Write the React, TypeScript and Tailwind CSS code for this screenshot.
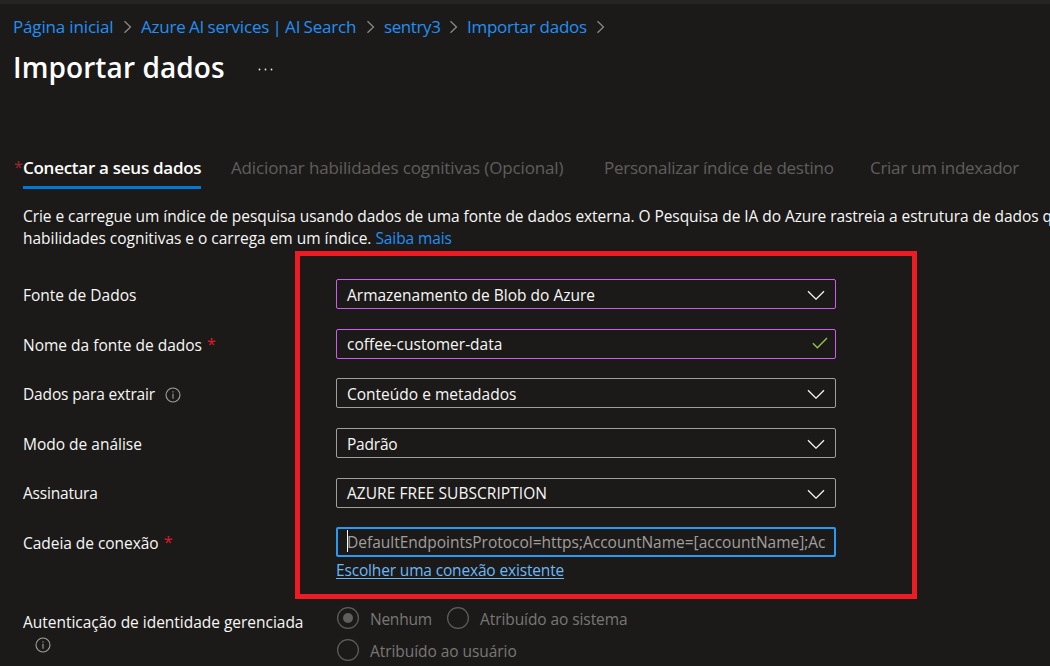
import type { ReactNode } from 'react';

const FIELD = 'flex h-[30px] w-[500px] justify-between rounded-[2px] border';

function CrumbArrow() {
  return (
    <svg className="mr-[9px] h-[14px] w-[9px] shrink-0" viewBox="0 0 9 14" fill="none" stroke="#8f8d8b" strokeWidth="1.2">
      <path d="M1.5 1.2 7.5 7 1.5 12.8" />
    </svg>
  );
}

function Crumb({ className, children }: { className: string; children: ReactNode }) {
  return (
    <li className={`flex items-center justify-between whitespace-nowrap ${className}`}>
      <a href="#" className="text-[#2190f5]">{children}</a>
      <CrumbArrow />
    </li>
  );
}

function ChevronDown() {
  return (
    <svg className="mt-[10px] mr-[10px] h-[10px] w-[18px] shrink-0" viewBox="0 0 18 10" fill="none" stroke="#f3f2f1" strokeWidth="1.3">
      <path d="M1 1.2 9 9.2 17 1.2" />
    </svg>
  );
}

function Info({ className }: { className: string }) {
  return (
    <svg className={`size-4 shrink-0 ${className}`} viewBox="0 0 16 16" fill="none" stroke="#a19f9d" strokeWidth="1.1">
      <circle cx="8" cy="8" r="7" />
      <path d="M8 6.7v5M8 4.2v1.3" />
    </svg>
  );
}

function Star() {
  return <span className="mb-[4px] ml-[5px] text-[16px] text-[#e3182d]">*</span>;
}

function Row({ height, label, children }: { height: string; label: ReactNode; children: ReactNode }) {
  return (
    <div className={`flex items-start ${height}`}>
      <div className="flex h-[34px] w-[313px] shrink-0 items-center whitespace-nowrap">{label}</div>
      {children}
    </div>
  );
}

function Select({ border, children }: { border: string; children: ReactNode }) {
  return (
    <div className={`${FIELD} ${border}`}>
      <div className="pl-[10px] leading-[30px]">{children}</div>
      <ChevronDown />
    </div>
  );
}

function Radio({ checked, className, children }: { checked?: boolean; className?: string; children: ReactNode }) {
  return (
    <label className={`flex h-[22px] items-start whitespace-nowrap text-[#797775] ${className ?? ''}`}>
      <svg className="mr-[11px] size-[22px] shrink-0" viewBox="0 0 22 22" fill="none" stroke="#605e5c" strokeWidth="1.2">
        <circle cx="11" cy="11" r="10.4" />
        {checked && <circle cx="11" cy="11" r="5" fill="#605e5c" stroke="none" />}
      </svg>
      <span className="leading-6">{children}</span>
    </label>
  );
}

export default function App() {
  return (
    <div className="relative h-[666px] w-[1050px] overflow-hidden border-t-4 border-[#252423] bg-[#1b1a19] font-['Open_Sans','Noto_Sans',sans-serif] text-[15.5px] text-[#f8f7f6]">
      <nav className="pt-[11px] pl-[13px] text-[17px] leading-[23px]">
        <ol className="flex">
          <Crumb className="w-[128px] tracking-[-0.16px]">Página inicial</Crumb>
          <Crumb className="w-[243px] tracking-[-0.2px] [word-spacing:-0.8px]">Azure AI services | AI Search</Crumb>
          <Crumb className="w-[83px] tracking-[-0.4px]">sentry3</Crumb>
          <Crumb className="w-[147px] tracking-[-0.26px]">Importar dados</Crumb>
        </ol>
      </nav>

      <header className="mt-[9px] flex h-10 items-center pl-[13px]">
        <h1 className="w-[244px] text-[28px] leading-10 font-semibold tracking-[0.1px] text-white">Importar dados</h1>
        <svg className="mt-[4px] h-[3px] w-4" viewBox="0 0 16 3" fill="#e8e6e4">
          <circle cx="2.5" cy="1.5" r="0.9" />
          <circle cx="8.5" cy="1.5" r="0.9" />
          <circle cx="14.5" cy="1.5" r="0.9" />
        </svg>
      </header>

      <div className="mt-[69px] flex h-[33px] pl-[14px] text-[17px] leading-[24px] whitespace-nowrap text-[#605e5c]">
        <span className="w-[9px] text-[16px] leading-[23px] text-[#a4262c]">*</span>
        <div className="mr-[30px] w-[178px] border-b-[3px] border-[#0078d4] font-semibold tracking-[-0.27px] text-white">
          Conectar a seus dados
        </div>
        <div className="w-[373px] tracking-[-0.14px]">Adicionar habilidades cognitivas (Opcional)</div>
        <div className="w-[266px] tracking-[-0.25px]">Personalizar índice de destino</div>
        <div className="tracking-[-0.28px]">Criar um indexador</div>
      </div>

      <p className="mt-[16px] pl-[23px] leading-[22px] tracking-[-0.06px] whitespace-nowrap">
        Crie e carregue um índice de pesquisa usando dados de uma fonte de dados externa. O Pesquisa de IA do Azure rastreia a estrutura de dados que
        <br />
        <span className="tracking-[-0.02px]">habilidades cognitivas e o carrega em um índice.{' '}</span>
        <a href="#" className="tracking-[-0.1px] text-[#2190f5]">Saiba mais</a>
      </p>

      <form className="mt-[30px] pl-[23px]">
        <Row height="h-[50px]" label={<span>Fonte de Dados</span>}>
          <Select border="border-[#cf5cf0]">Armazenamento de Blob do Azure</Select>
        </Row>
        <Row height="h-[49px]" label={<><span>Nome da fonte de dados</span><Star /></>}>
          <div className={`${FIELD} border-[#cf5cf0]`}>
            <div className="pl-[10px] leading-7">coffee-customer-data</div>
            <svg className="mt-[7px] mr-[7px] h-3 w-4" viewBox="0 0 16 12" fill="none" stroke="#92c353" strokeWidth="1.4">
              <path d="M.9 6.2 5.4 10.7 15 1.1" />
            </svg>
          </div>
        </Row>
        <Row height="h-[50px]" label={<><span className="tracking-[-0.15px]">Dados para extrair</span><Info className="ml-[10px]" /></>}>
          <Select border="border-[#a19f9d]">Conteúdo e metadados</Select>
        </Row>
        <Row height="h-[50px]" label={<span>Modo de análise</span>}>
          <Select border="border-[#a19f9d]"><span className="tracking-[-0.2px]">Padrão</span></Select>
        </Row>
        <Row height="h-[49px]" label={<span className="mb-[2px] tracking-[-0.2px]">Assinatura</span>}>
          <div className={`${FIELD} border-[#a19f9d]`}>
            <div className="pl-[10px] leading-7 tracking-[0.05px]">AZURE FREE SUBSCRIPTION</div>
            <ChevronDown />
          </div>
        </Row>
        <Row height="h-[80px]" label={<><span className="tracking-[-0.04px]">Cadeia de conexão</span><Star /></>}>
          <div>
            <div className="flex h-[30px] w-[500px] items-start overflow-hidden rounded-[2px] border-2 border-[#2899f5] pl-[9px]">
              <span className="mt-[1px] -mr-px h-[22px] w-px shrink-0 bg-white" />
              <span className="leading-[27px] tracking-[-0.01px] whitespace-nowrap text-[#a19f9d]">
                DefaultEndpointsProtocol=https;AccountName=[accountName];Ac
              </span>
            </div>
            <a href="#" className="mt-[2px] block leading-[22px] tracking-[-0.16px] text-[#6cb8f6] underline decoration-1 underline-offset-2">
              Escolher uma conexão existente
            </a>
          </div>
        </Row>
        <div className="flex items-start">
          <div className="w-[313px] shrink-0 pt-1 leading-[22px] tracking-[-0.02px] whitespace-nowrap">
            Autenticação de identidade gerenciada
            <Info className="mt-[4px] ml-[11.5px]" />
          </div>
          <div className="flex w-[500px] flex-wrap gap-y-[10px] pl-px">
            <Radio checked className="w-[110px] tracking-[-0.25px]">Nenhum</Radio>
            <Radio className="w-[300px] tracking-[-0.08px]">Atribuído ao sistema</Radio>
            <Radio className="w-[300px] tracking-[-0.06px]">Atribuído ao usuário</Radio>
          </div>
        </div>
      </form>

      <div className="pointer-events-none absolute top-[247px] left-[295px] h-[348px] w-[622px] border-[5px] border-[#ed1c24]" />
    </div>
  );
}
